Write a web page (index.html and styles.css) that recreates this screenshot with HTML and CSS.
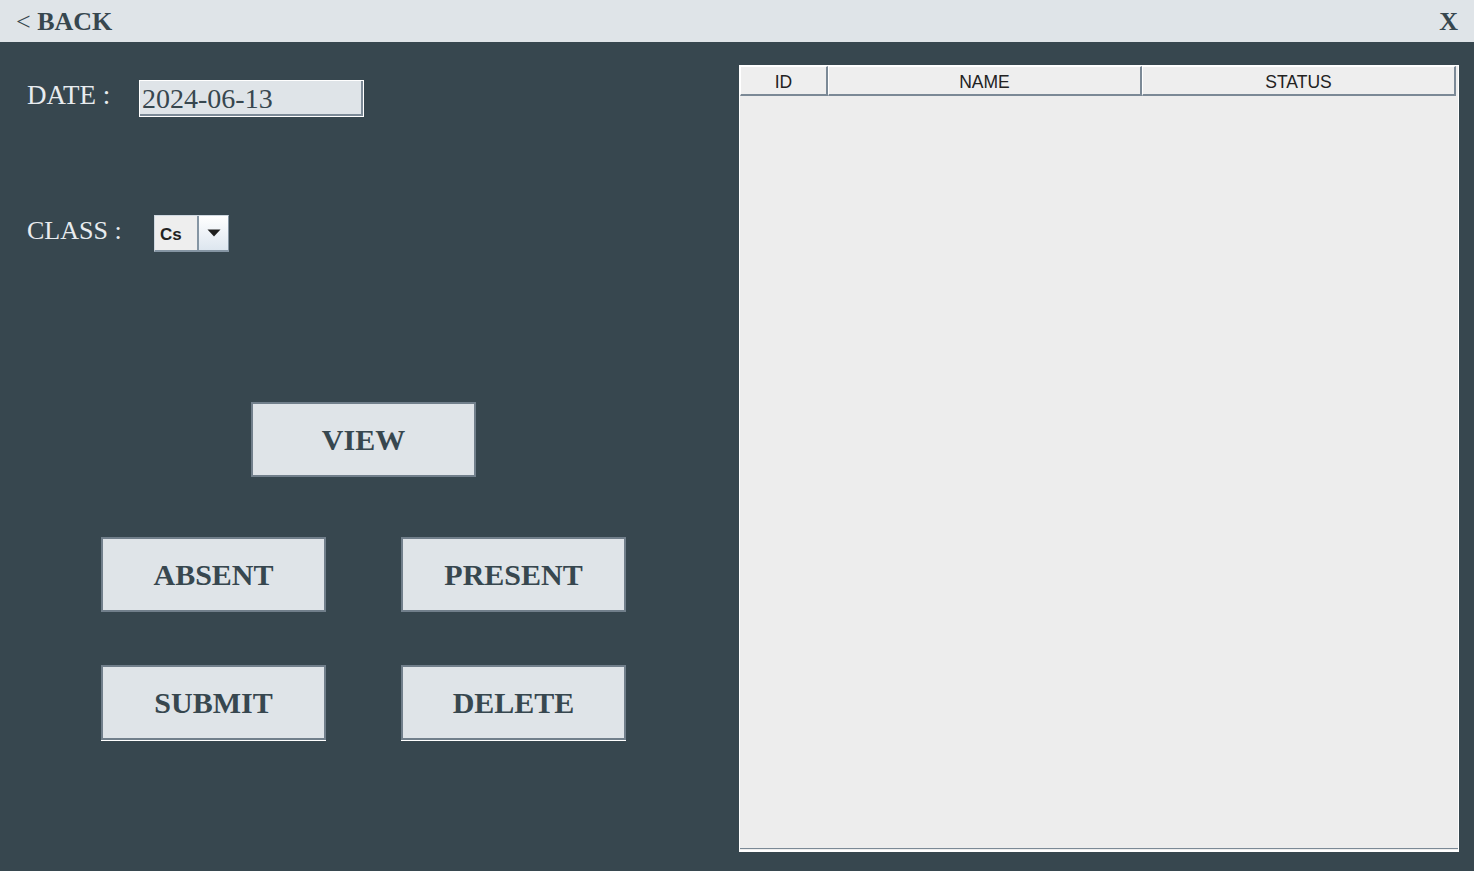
FILE: index.html
```html
<!DOCTYPE html>
<html>
<head>
<meta charset="utf-8">
<link rel="stylesheet" href="styles.css">
</head>
<body>
<div class="topbar">
  <span class="back"><span class="lt">&lt;</span> BACK</span>
  <span class="close">X</span>
</div>
<div class="main">
  <div class="left">
    <div class="row date-row">
      <span class="label date-label">DATE :</span>
      <div class="date-input"><span>2024-06-13</span></div>
    </div>
    <div class="row class-row">
      <span class="label class-label">CLASS :</span>
      <div class="combo">
        <span class="combo-text">Cs</span>
        <span class="combo-btn"><svg width="14" height="8" viewBox="0 0 14 8"><path d="M0.5 0.5h13L7 7.5z" fill="#1e1e1e"/></svg></span>
      </div>
    </div>
    <div class="btn-row view-row">
      <button class="btn">VIEW</button>
    </div>
    <div class="btn-row pair-row first">
      <button class="btn">ABSENT</button>
      <button class="btn">PRESENT</button>
    </div>
    <div class="btn-row pair-row second">
      <button class="btn underlined">SUBMIT</button>
      <button class="btn underlined">DELETE</button>
    </div>
  </div>
  <div class="table-panel">
    <div class="thead">
      <div class="th th-id">ID</div>
      <div class="th th-name">NAME</div>
      <div class="th th-status">STATUS</div>
    </div>
    <div class="tbody"></div>
  </div>
</div>
</body>
</html>
```
FILE: styles.css
```css
html, body {
  margin: 0;
  padding: 0;
}
body {
  width: 1474px;
  height: 871px;
  background: #37474f;
  overflow: hidden;
  font-family: "Liberation Serif", "Times New Roman", serif;
}
.topbar {
  height: 42px;
  background: #dfe4e8;
  display: flex;
  align-items: center;
  justify-content: space-between;
  padding: 0 16px 0 16px;
  box-sizing: border-box;
  color: #37474f;
}
.back {
  font-weight: bold;
  font-size: 26px;
  padding-top: 1px;
}
.back .lt {
  font-weight: normal;
}
.close {
  font-weight: bold;
  font-size: 26px;
  padding-top: 1px;
}
.main {
  display: flex;
}
.left {
  width: 739px;
  padding: 38px 0 0 27px;
  box-sizing: border-box;
}
.row {
  display: flex;
  align-items: center;
  height: 37px;
}
.label {
  color: #e8ecef;
}
.date-label {
  width: 112px;
  font-size: 27px;
  margin-top: -6px;
}
.date-input {
  width: 225px;
  height: 37px;
  box-sizing: border-box;
  border: 1px solid #ffffff;
  background: #dfe4e8;
  box-shadow: inset -2px -2px 0 #7b8996;
  display: flex;
  align-items: center;
  padding-left: 2px;
  font-size: 28px;
  color: #37474f;
}
.date-input span {
  margin-top: 1px;
}
.class-row {
  margin-top: 98px;
}
.class-label {
  width: 127px;
  font-size: 26px;
  margin-top: -5px;
}
.combo {
  width: 75px;
  height: 37px;
  box-sizing: border-box;
  display: flex;
  border: 1px solid #cfd8e0;
  border-bottom: 2px solid #8595a3;
  border-right: 1px solid #8595a3;
}
.combo-text {
  width: 44px;
  background: #eeeeee;
  border-right: 2px solid #8595a3;
  font-family: "Liberation Sans", Arial, sans-serif;
  font-weight: bold;
  font-size: 17px;
  color: #222222;
  display: flex;
  align-items: center;
  padding-left: 5px;
  box-sizing: border-box;
  padding-top: 3px;
}
.combo-btn {
  flex: 1;
  background: linear-gradient(#ffffff, #dde6ef);
  display: flex;
  align-items: center;
  justify-content: center;
  padding-bottom: 1px;
}
.btn-row {
  display: flex;
}
.view-row {
  margin-top: 150px;
  margin-left: 224px;
}
.pair-row {
  margin-left: 74px;
  gap: 75px;
}
.pair-row.first {
  margin-top: 60px;
}
.pair-row.second {
  margin-top: 53px;
}
.btn {
  width: 225px;
  height: 75px;
  box-sizing: border-box;
  background: #dfe4e8;
  border: 2px solid #717f8b;
  color: #37474f;
  font-family: "Liberation Serif", "Times New Roman", serif;
  font-weight: bold;
  font-size: 30px;
  padding: 0;
  margin: 0;
}
.btn.underlined {
  box-shadow: 0 1px 0 #ffffff;
}
.table-panel {
  margin-top: 23px;
  width: 720px;
  height: 787px;
  box-sizing: border-box;
  border: 1px solid #ffffff;
  border-bottom-width: 2px;
  background: #ededed;
  display: flex;
  flex-direction: column;
}
.thead {
  display: flex;
  height: 30px;
}
.th {
  box-sizing: border-box;
  height: 30px;
  background: #eeeeee;
  border-top: 1px solid #ffffff;
  border-left: 1px solid #ffffff;
  border-right: 2px solid #7b8996;
  border-bottom: 2px solid #7b8996;
  font-family: "Liberation Sans", Arial, sans-serif;
  font-size: 17.5px;
  color: #222222;
  display: flex;
  align-items: center;
  justify-content: center;
  padding-top: 3px;
}
.th-id {
  width: 88px;
}
.th-name {
  width: 314px;
}
.th-status {
  width: 314px;
}
.tbody {
  flex: 1;
  border-bottom: 1px solid #7b8996;
  margin-bottom: 1px;
}
```
